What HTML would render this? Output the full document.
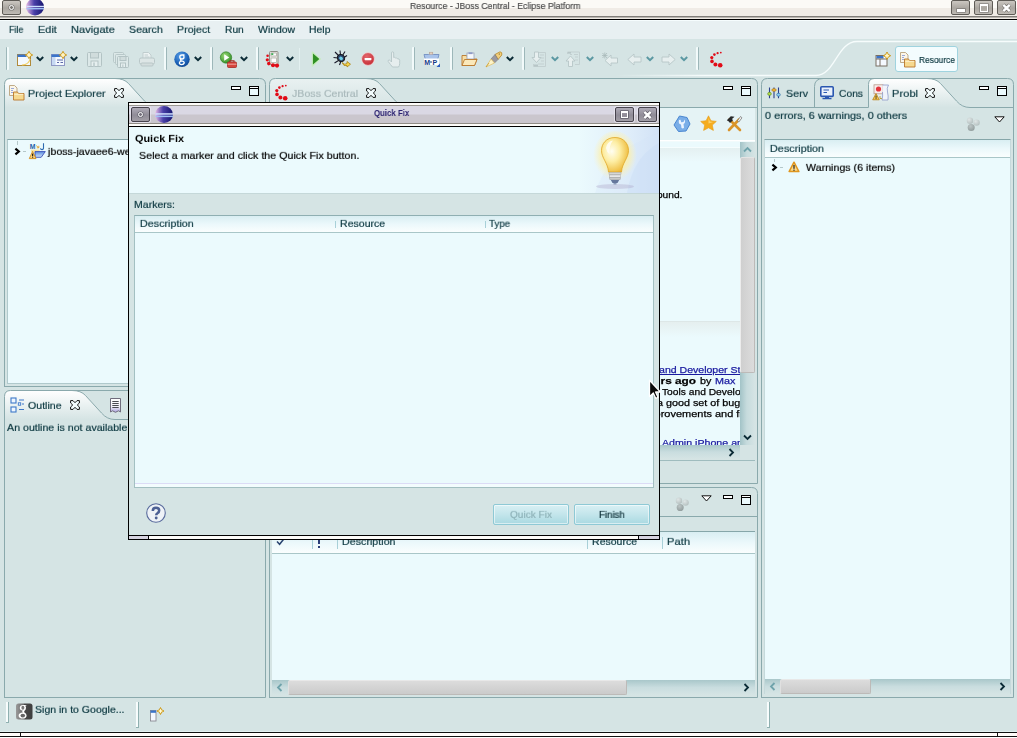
<!DOCTYPE html>
<html><head><meta charset="utf-8"><title>Resource - JBoss Central - Eclipse Platform</title>
<style>
*{box-sizing:border-box;margin:0;padding:0}
html,body{width:1017px;height:738px;overflow:hidden}
body{position:relative;background:#d5e4e4;font-family:"Liberation Sans",sans-serif;font-size:10.5px;color:#0c3840}
.a{position:absolute}
.t{position:absolute;white-space:pre;transform-origin:0 0;will-change:transform}
svg{position:absolute;overflow:visible}
.hd{position:absolute;width:3px;height:22px;top:47px;border-left:1px solid #9fb9ba;border-right:1px solid #f3fbfb;background:#e9f3f3;border-radius:1px}
.dd{position:absolute;top:56px;width:7px;height:5px}
.min{position:absolute;width:10px;height:4px;border:1px solid #000;background:#fff}
.max{position:absolute;width:10px;height:10px;border:1px solid #000;background:#ebfafd}.max i{position:absolute;left:0;top:0;width:8px;height:2px;background:#fff;border-bottom:1px solid #000}
.colh{position:absolute;background:linear-gradient(#d9eef2,#ebf8fb 50%,#fafefe);border-bottom:1px solid #a9c6c8}
.vsep{position:absolute;width:1px;background:#a8d0d8}
</style></head><body>
<!-- SECTION: frame -->
<div class="a" style="left:0;top:0;width:1017px;height:21px;background:linear-gradient(#fbfaf6 0 8px,#f0ece6 8px 16px,#807d79 16px 17px,#b9b5af 17px 18px,#f0ebe5 18px 19px,#000 19px 20px,#f6fdfe 20px 21px)"></div>
<div class="a" style="left:0;top:21px;width:1017px;height:18px;background:#e8f0f2"></div>
<!-- window menu button -->
<div class="a" style="left:2px;top:0;width:19px;height:15px;border:1px solid #5e5b56;border-radius:2px;background:linear-gradient(#cbc7c1,#aaa6a0 55%,#bfbbb5)"></div>
<div class="a" style="left:8.8px;top:4.9px;width:5.4px;height:5.4px;border:1.3px solid #fff;border-radius:50%;background:#7a7772;box-shadow:0 0 0 .6px rgba(60,60,60,.45)"></div>
<!-- eclipse icon -->
<svg style="left:26px;top:-1px" width="18" height="17" viewBox="0 0 18 17"><defs><linearGradient id="ec" x1="0" x2="1"><stop offset="0" stop-color="#ecc4e6"/><stop offset=".22" stop-color="#9a7cc8"/><stop offset=".45" stop-color="#4a40a8"/><stop offset="1" stop-color="#15156e"/></linearGradient></defs><ellipse cx="9" cy="8" rx="9" ry="8.5" fill="url(#ec)"/><rect x="0.5" y="6.8" width="17.5" height="1.4" fill="#cfe0ff"/><rect x="0.5" y="9" width="17.5" height="1.4" fill="#9fc0f5"/></svg>
<!-- window buttons -->
<div class="a" style="left:951px;top:0;width:19px;height:15px;border:1px solid #5e5b56;border-radius:2px;background:linear-gradient(#cbc7c1,#aaa6a0 55%,#bfbbb5)"></div>
<div class="a" style="left:957px;top:9px;width:8px;height:3px;background:#fff;box-shadow:0 0 0 .7px rgba(60,60,60,.45)"></div>
<div class="a" style="left:974px;top:0;width:19px;height:15px;border:1px solid #5e5b56;border-radius:2px;background:linear-gradient(#cbc7c1,#aaa6a0 55%,#bfbbb5)"></div>
<div class="a" style="left:980px;top:4px;width:8px;height:7.5px;border:1.6px solid #fff;border-top-width:2.6px;box-shadow:0 0 0 .7px rgba(60,60,60,.45)"></div>
<div class="a" style="left:997px;top:0;width:19px;height:15px;border:1px solid #5e5b56;border-radius:2px;background:linear-gradient(#cbc7c1,#aaa6a0 55%,#bfbbb5)"></div>
<svg style="left:1002px;top:4px" width="9" height="8" viewBox="0 0 9 8"><path d="M1.3 0.8 L7.7 7.2 M7.7 0.8 L1.3 7.2" stroke="#6a6762" stroke-width="3.6"/><path d="M1.3 0.8 L7.7 7.2 M7.7 0.8 L1.3 7.2" stroke="#fff" stroke-width="2.5"/></svg>

<!-- SECTION: toolbar -->
<div class="a" style="left:6px;top:47px;width:3px;height:23px;background:linear-gradient(90deg,#9db7b9 0 1px,#f2fafa 1px 3px);border-radius:1px"></div>
<svg style="left:17px;top:51px" width="16" height="16" viewBox="0 0 16 16"><rect x="0.5" y="3.5" width="13" height="11" fill="#f4f9ff" stroke="#b08a3a"/><rect x="0.5" y="3.5" width="9" height="2.5" fill="#3b74c9"/><path d="M13 8 Q12 13.5 5 14" fill="none" stroke="#f2cf62" stroke-width="1.2"/><path d="M12 0.3 L13.3 2.7 L15.7 4 L13.3 5.3 L12 7.7 L10.7 5.3 L8.3 4 L10.7 2.7 Z" fill="#f6d56a" stroke="#c8951a" stroke-width="0.9" stroke-linejoin="round"/><path d="M12 2 V6 M10 4 H14" stroke="#fffbe0" stroke-width="1.1"/></svg>
<svg style="left:36px;top:56px" width="8" height="6" viewBox="0 0 8 6"><path d="M0.8 1 L4 4.2 L7.2 1" fill="none" stroke="#0b2b36" stroke-width="2"/></svg>
<svg style="left:51px;top:51px" width="16" height="16" viewBox="0 0 16 16"><rect x="0.5" y="3.5" width="13" height="11" fill="#f4f9ff" stroke="#8f98c4"/><rect x="0.5" y="3.5" width="9" height="2.5" fill="#3b74c9"/><rect x="1" y="6" width="3.5" height="8" fill="#c7d9f3"/><path d="M6 9 H12 M6 11.5 H8 M9.5 11.5 H12" stroke="#5d6aa8" stroke-width="1.1"/><path d="M12 0.3 L13.3 2.7 L15.7 4 L13.3 5.3 L12 7.7 L10.7 5.3 L8.3 4 L10.7 2.7 Z" fill="#f6d56a" stroke="#c8951a" stroke-width="0.9" stroke-linejoin="round"/><path d="M12 2 V6 M10 4 H14" stroke="#fffbe0" stroke-width="1.1"/></svg>
<svg style="left:70px;top:56px" width="8" height="6" viewBox="0 0 8 6"><path d="M0.8 1 L4 4.2 L7.2 1" fill="none" stroke="#0b2b36" stroke-width="2"/></svg>
<svg style="left:87px;top:52px" width="15" height="15" viewBox="0 0 15 15"><rect x="0.5" y="0.5" width="14" height="14" rx="1" fill="#dce8e8" stroke="#b3c3c4"/><rect x="3.5" y="0.5" width="8" height="5.5" fill="#d0dcdc" stroke="#b3c3c4"/><rect x="4" y="9" width="7" height="5.5" fill="#e6efef" stroke="#b3c3c4"/><rect x="6" y="10.5" width="2" height="4" fill="#c4d2d3"/></svg>
<svg style="left:113px;top:52px" width="16" height="16" viewBox="0 0 16 16"><rect x="0.5" y="0.5" width="10" height="10" rx="1" fill="#dce8e8" stroke="#b8c8c9"/><rect x="2.5" y="2.5" width="10" height="10" rx="1" fill="#dce8e8" stroke="#b8c8c9"/><rect x="4.5" y="4.5" width="11" height="11" rx="1" fill="#dde9e9" stroke="#b3c3c4"/><rect x="7" y="4.5" width="6" height="4" fill="#d0dcdc" stroke="#b3c3c4"/><rect x="7.5" y="11" width="5" height="4.5" fill="#e6efef" stroke="#b3c3c4"/><rect x="9" y="12.5" width="1.6" height="3" fill="#c4d2d3"/></svg>
<svg style="left:139px;top:52px" width="16" height="15" viewBox="0 0 16 15"><path d="M4 6 V0.5 H9.5 L12 3 V6" fill="#edf3f3" stroke="#c0cdce"/><path d="M5.5 3 H9 M5.5 5 H10.5" stroke="#c0cdce"/><rect x="0.5" y="6" width="15" height="6" rx="1.5" fill="#dde6e6" stroke="#b9c7c8"/><rect x="2" y="11" width="12" height="3" rx="1" fill="#d3dddd" stroke="#b9c7c8"/></svg>
<div class="a" style="left:164px;top:47px;width:3px;height:23px;background:linear-gradient(90deg,#f2fafa 0 2px,#9db7b9 2px 3px);border-radius:1px"></div>
<svg style="left:174px;top:51px" width="16" height="17" viewBox="0 0 16 17"><defs><radialGradient id="gg" cx=".4" cy=".3" r=".8"><stop offset="0" stop-color="#5aa0e8"/><stop offset=".6" stop-color="#1c62b8"/><stop offset="1" stop-color="#0d3f86"/></radialGradient></defs><circle cx="8" cy="8.3" r="7.7" fill="url(#gg)"/><path d="M10.5 4 H8 Q5.8 4 5.8 6 Q5.8 8 8 8 Q10 8 10 6 Q10 4.6 9 4 M7.5 8 Q5.5 9.2 7.5 9.8 Q10.6 10.5 10.2 12 Q9.8 13.6 7.6 13.6 Q5.2 13.5 5.4 11.8 Q5.6 10.4 7.5 9.9" fill="none" stroke="#fff" stroke-width="1.3"/></svg>
<svg style="left:194px;top:56px" width="8" height="6" viewBox="0 0 8 6"><path d="M0.8 1 L4 4.2 L7.2 1" fill="none" stroke="#0b2b36" stroke-width="2"/></svg>
<div class="a" style="left:210px;top:47px;width:3px;height:23px;background:linear-gradient(90deg,#f2fafa 0 2px,#9db7b9 2px 3px);border-radius:1px"></div>
<svg style="left:220px;top:51px" width="17" height="17" viewBox="0 0 17 17"><defs><radialGradient id="rg" cx=".4" cy=".35" r=".7"><stop offset="0" stop-color="#9edc7a"/><stop offset="1" stop-color="#2d8a22"/></radialGradient></defs><circle cx="6" cy="6.5" r="5.7" fill="url(#rg)" stroke="#2a7a20" stroke-width=".6"/><path d="M4.2 3.2 L9.3 6.5 L4.2 9.8 Z" fill="#fff"/><rect x="7.5" y="11" width="9" height="5.5" rx="1" fill="#d6453e" stroke="#a52822" stroke-width=".8"/><path d="M10 11 V9.8 H14 V11" fill="none" stroke="#a52822" stroke-width="1.1"/><path d="M7.5 13.2 H16.5" stroke="#f3b1a8" stroke-width=".9"/></svg>
<svg style="left:240px;top:56px" width="8" height="6" viewBox="0 0 8 6"><path d="M0.8 1 L4 4.2 L7.2 1" fill="none" stroke="#0b2b36" stroke-width="2"/></svg>
<div class="a" style="left:256px;top:47px;width:3px;height:23px;background:linear-gradient(90deg,#f2fafa 0 2px,#9db7b9 2px 3px);border-radius:1px"></div>
<svg style="left:265px;top:50px" width="16" height="18" viewBox="0 0 16 18"><rect x="4.5" y="1.5" width="8.5" height="13" rx="1" fill="#e9e9e4" stroke="#8d8d84"/><rect x="6" y="3" width="5.5" height="3" fill="#fff" stroke="#a3a39b" stroke-width=".7"/><rect x="6.3" y="3.3" width="2" height="1.6" fill="#2aa745"/><rect x="6" y="8" width="5.5" height="4.5" fill="#fff" stroke="#a3a39b" stroke-width=".7"/><g fill="#e10b17"><circle cx="2.6" cy="5.8" r="1.3"/><circle cx="2.3" cy="9.8" r="1.6"/><circle cx="3.8" cy="13.6" r="1.8"/><circle cx="8" cy="15.3" r="2"/><circle cx="12" cy="15.6" r="2.1"/></g></svg>
<svg style="left:286px;top:56px" width="8" height="6" viewBox="0 0 8 6"><path d="M0.8 1 L4 4.2 L7.2 1" fill="none" stroke="#0b2b36" stroke-width="2"/></svg>
<div class="a" style="left:299px;top:48px;width:1px;height:22px;background:#e3f0f0"></div>
<svg style="left:311px;top:51px" width="11" height="16" viewBox="0 0 11 16"><path d="M1.3 1 L9.3 8 L1.3 15 Z" fill="#3a9a2c" stroke="#c9eec0" stroke-width="1.2" stroke-linejoin="round"/><path d="M2.3 3.2 L7.7 8 L2.3 12.8 Z" fill="#2f8f24"/></svg>
<svg style="left:333px;top:50px" width="18" height="18" viewBox="0 0 18 18"><g stroke="#1a1a2a" stroke-width="1.1"><path d="M2 2 L6 6 M7 0.5 L7.5 5 M12 1.5 L9.5 5.5 M0.5 7.5 L5 8 M1.5 13 L5.5 10.5 M6.5 15 L8 11 M14 5.5 L11 7.5"/></g><ellipse cx="8" cy="8" rx="3.8" ry="3.4" fill="#2a3f66" stroke="#111" transform="rotate(35 8 8)"/><ellipse cx="8.3" cy="8.3" rx="2" ry="1.6" fill="#6fd0e8" transform="rotate(35 8 8)"/><path d="M9 12.5 Q12 15.5 14 13.5 V11.5 L17.5 14.2 L14 17 V15.5 Q10.5 16.8 9 12.5 Z" fill="#f7d54a" stroke="#a9831a" stroke-width=".8"/></svg>
<svg style="left:361px;top:52px" width="14" height="14" viewBox="0 0 14 14"><defs><radialGradient id="sg" cx=".4" cy=".3" r=".8"><stop offset="0" stop-color="#e2666c"/><stop offset="1" stop-color="#c3272f"/></radialGradient></defs><circle cx="7" cy="7" r="6.4" fill="url(#sg)" stroke="#f2dfe0" stroke-width=".8"/><rect x="3.6" y="5.9" width="6.8" height="2.3" rx=".6" fill="#fff"/></svg>
<svg style="left:387px;top:51px" width="15" height="17" viewBox="0 0 15 17"><path d="M4.5 9 V2 Q4.5 0.8 5.6 0.8 Q6.7 0.8 6.7 2 V6.5 Q7.8 5.8 8.6 7 Q9.8 6.5 10.5 7.8 Q12.5 7.3 12.7 9.5 V12.5 Q12.5 15 11.5 16 H5.5 Q3.5 13.5 1.2 10.5 Q0.8 9 2.3 9 Q3.5 9.5 4.5 11 Z" fill="#e6eeee" stroke="#b6c6c7" stroke-width=".9"/></svg>
<div class="a" style="left:412px;top:47px;width:3px;height:23px;background:linear-gradient(90deg,#f2fafa 0 2px,#9db7b9 2px 3px);border-radius:1px"></div>
<svg style="left:423px;top:50px" width="18" height="18" viewBox="0 0 18 18"><path d="M1 4.5 H5.5 Q8 1.5 10.5 4.5 H16 L14.5 10 H2.5 Z" fill="#a9c3ea" stroke="#7390c2" stroke-width=".9"/><rect x="6.4" y="2.2" width="3.4" height="2" fill="#e9d3c0" stroke="#b09a8a" stroke-width=".5"/><rect x="1" y="8.5" width="15" height="6.5" fill="#fff"/><text x="1.2" y="14.6" font-family="Liberation Sans" font-weight="bold" font-size="7" fill="#143a86">M</text><text x="9.5" y="14.6" font-family="Liberation Sans" font-weight="bold" font-size="7" fill="#143a86">P</text><rect x="7.3" y="11.3" width="1.4" height="1.4" fill="#143a86"/><path d="M17 13.5 V17 H13.5 Z" fill="#2b5cc0"/></svg>
<div class="a" style="left:450px;top:47px;width:3px;height:23px;background:linear-gradient(90deg,#f2fafa 0 2px,#9db7b9 2px 3px);border-radius:1px"></div>
<svg style="left:461px;top:52px" width="17" height="15" viewBox="0 0 17 15"><path d="M1 3.5 H5.5 L6.5 5 H12.5 V7 H16 L13.5 13.5 H1 Z" fill="#f7dfa5" stroke="#b9772b" stroke-width=".9" stroke-linejoin="round"/><rect x="6" y="1" width="7" height="6" fill="#f6f8fb" stroke="#9aa2b8" stroke-width=".8"/><rect x="7.5" y="0.3" width="4" height="1.8" fill="#8e9bc8"/><path d="M3.5 7.5 H16 L13.5 13.5 H1 Z" fill="#fbe9bb" stroke="#b9772b" stroke-width=".9" stroke-linejoin="round"/></svg>
<svg style="left:485px;top:51px" width="18" height="17" viewBox="0 0 18 17"><path d="M10 3.5 L15 0.8 Q17.5 1 16.8 4 L13 8.5 Z" fill="#f2cf7a" stroke="#b7862a" stroke-width=".8"/><path d="M6 8 L10 3.5 L13 8.5 L9.5 12 Z" fill="#9b9aa0" stroke="#77767c" stroke-width=".6"/><path d="M6 8 L9.5 12 L1 16 Z" fill="#fdf3c9" stroke="#e0bb5c" stroke-width=".7"/><path d="M1 16 L4 12" stroke="#c99a2e" stroke-width=".8"/><circle cx="14.3" cy="3" r=".6" fill="#5a4a1a"/></svg>
<svg style="left:506px;top:56px" width="8" height="6" viewBox="0 0 8 6"><path d="M0.8 1 L4 4.2 L7.2 1" fill="none" stroke="#0b2b36" stroke-width="2"/></svg>
<div class="a" style="left:522px;top:47px;width:3px;height:23px;background:linear-gradient(90deg,#f2fafa 0 2px,#9db7b9 2px 3px);border-radius:1px"></div>
<svg style="left:531px;top:51px" width="16" height="17" viewBox="0 0 16 17"><path d="M7 1.5 H14.5 V15.5 H2.5 V13" fill="none" stroke="#c3d0d1"/><path d="M9 4 H13 M10 7 H13 M10 10 H13 M7 13 H13" stroke="#c3d0d1"/><path d="M3.5 1 H7.5 V6.5 H10 L5.5 11.5 L1 6.5 H3.5 Z" fill="#e7efef" stroke="#b7c6c7" stroke-width=".9"/><rect x="3" y="13.5" width="4" height="2" fill="#b7c6c7"/></svg>
<svg style="left:551px;top:56px" width="8" height="6" viewBox="0 0 8 6"><path d="M0.8 1 L4 4.2 L7.2 1" fill="none" stroke="#5b98a2" stroke-width="2"/></svg>
<svg style="left:565px;top:51px" width="16" height="17" viewBox="0 0 16 17"><path d="M2.5 3 V1 H14.5 V13.5 H10" fill="none" stroke="#c3d0d1"/><path d="M5 3.5 H7 M9 3.5 H13 M10 6 H13 M10 9 H13" stroke="#c3d0d1"/><path d="M3.5 15.5 H7.5 V10 H10 L5.5 5 L1 10 H3.5 Z" fill="#e7efef" stroke="#b7c6c7" stroke-width=".9"/><rect x="3" y="1" width="3" height="1.6" fill="#b7c6c7"/></svg>
<svg style="left:586px;top:56px" width="8" height="6" viewBox="0 0 8 6"><path d="M0.8 1 L4 4.2 L7.2 1" fill="none" stroke="#5b98a2" stroke-width="2"/></svg>
<svg style="left:601px;top:52px" width="18" height="15" viewBox="0 0 18 15"><path d="M1.5 1 L6 6 M1 3.5 H6.5 M3.8 0.5 V6.5 M6 1 L1.5 6" stroke="#a9baba" stroke-width=".8"/><path d="M10 3 V6 H16.5 V11 H10 V14 L4 8.5 Z" fill="#e7efef" stroke="#b7c6c7" stroke-width=".9"/></svg>
<svg style="left:627px;top:53px" width="15" height="13" viewBox="0 0 15 13"><path d="M7 1 V4 H14 V9 H7 V12 L0.8 6.5 Z" fill="#e7efef" stroke="#b7c6c7" stroke-width=".9"/></svg>
<svg style="left:646px;top:56px" width="8" height="6" viewBox="0 0 8 6"><path d="M0.8 1 L4 4.2 L7.2 1" fill="none" stroke="#5b98a2" stroke-width="2"/></svg>
<svg style="left:661px;top:53px" width="15" height="13" viewBox="0 0 15 13"><path d="M8 1 V4 H1 V9 H8 V12 L14.2 6.5 Z" fill="#e7efef" stroke="#b7c6c7" stroke-width=".9"/></svg>
<svg style="left:680px;top:56px" width="8" height="6" viewBox="0 0 8 6"><path d="M0.8 1 L4 4.2 L7.2 1" fill="none" stroke="#5b98a2" stroke-width="2"/></svg>
<div class="a" style="left:696px;top:47px;width:3px;height:23px;background:linear-gradient(90deg,#f2fafa 0 2px,#9db7b9 2px 3px);border-radius:1px"></div>
<svg style="left:709px;top:51px" width="15.0" height="17.0" viewBox="0 0 15 17"><g fill="#e10b17"><circle cx="11.8" cy="1.6" r=".9"/><circle cx="8.6" cy="2.2" r="1.1"/><circle cx="5.4" cy="3.6" r="1.3"/><circle cx="2.8" cy="6.6" r="1.6"/><circle cx="3" cy="10.4" r="1.8"/><circle cx="6.4" cy="13.4" r="2"/><circle cx="11.2" cy="14.2" r="2.3"/></g></svg>
<!-- SECTION: panels -->
<svg style="left:4px;top:78px" width="262" height="309" viewBox="0 0 262 309"><defs><linearGradient id="g1" x1="0" y1="0" x2="0" y2="1"><stop offset="0" stop-color="#ffffff"/><stop offset="1" stop-color="#d5e4e4"/></linearGradient></defs><path d="M0.5 29.5 V6.5 Q0.5 0.5 6.5 0.5 H111 Q120 0.5 124.5 5.5 L140.5 23 Q146 29.5 154 29.5 Z" fill="url(#g1)"/><path d="M111 0.5 Q120 0.5 124.5 5.5 L140.5 23 Q146 29.5 154 29.5 H261" fill="none" stroke="#8aa9ac"/><path d="M0.5 309 V6.5 Q0.5 0.5 6.5 0.5 H255.5 Q261.5 0.5 261.5 6.5 V308.5 H0.5" fill="none" stroke="#8aa9ac"/></svg>
<div class="min" style="left:231px;top:86px"></div><div class="max" style="left:249px;top:86px"><i></i></div>
<svg style="left:9px;top:85px" width="16" height="16" viewBox="0 0 16 16"><path d="M0.5 0.5 H5.5 L8 3 V10.5 H0.5 Z" fill="#fbf6ea" stroke="#b9a27a" stroke-width=".9"/><path d="M2 3.5 H5 M2 5.5 H4 M2 7.5 H4" stroke="#8fa0d8" stroke-width=".9"/><path d="M4.5 7 H8.5 L9.5 8.5 H15 V15 H4.5 Z" fill="#f6d98f" stroke="#b9772b" stroke-width=".9" stroke-linejoin="round"/><path d="M5.3 9.3 H14.2" stroke="#fdf1cf" stroke-width="1"/></svg>
<svg style="left:114px;top:88px" width="10" height="10" viewBox="0 0 10 10"><path d="M0.6 0.6 H3 L5 2.7 L7 0.6 H9.4 V3 L7.3 5 L9.4 7 V9.4 H7 L5 7.3 L3 9.4 H0.6 V7 L2.7 5 L0.6 3 Z" fill="#f3fcfd" stroke="#111" stroke-width="1" stroke-linejoin="round"/></svg>
<div class="a" style="left:7px;top:139px;width:257px;height:245px;border:1px solid #b0c9cc;border-top-color:#86a6a9;background:#ebfafd"></div>
<svg style="left:14px;top:147px" width="8" height="9" viewBox="0 0 8 9"><path d="M1.4 1.6 L4.8 4.5 L1.4 7.4" fill="none" stroke="#000" stroke-width="2.2"/></svg>
<div class="a" style="left:17px;top:141px;width:1px;height:4px;background:#b5c8ca"></div><div class="a" style="left:23px;top:151px;width:3px;height:1px;background:#b5c8ca"></div>
<svg style="left:29px;top:143px" width="17" height="17" viewBox="0 0 17 17"><defs><linearGradient id="mjf" x1="0" y1="0" x2="0" y2="1"><stop offset="0" stop-color="#5d8fe0"/><stop offset="1" stop-color="#cfe2fa"/></linearGradient></defs><text x="0.8" y="5.8" font-family="Liberation Sans" font-weight="bold" font-size="6.8" fill="#1f5fa8">M</text><path d="M7.2 2.6 L9.6 4.6 M9.8 2.8 V4.8 H7.8" stroke="#e0a030" stroke-width=".9" fill="none"/><path d="M14.5 0.3 V5 Q14.5 6.6 13 6.6 Q11.7 6.6 11.4 5.4" fill="none" stroke="#2d6ab0" stroke-width="1.1"/><rect x="2" y="6.6" width="8.5" height="2.6" fill="#f8e4a4"/><path d="M6 8.6 H16.3 L12.2 14.3 H6 Z" fill="url(#mjf)" stroke="#2a3fb0" stroke-width=".8" stroke-linejoin="round"/><path d="M3.6 8.4 L7 15.6 H0.3 Z" fill="#fbd27a" stroke="#d08a1a" stroke-width=".9" stroke-linejoin="round"/><rect x="3.1" y="10.6" width="1.1" height="2.4" fill="#111"/><rect x="3.1" y="13.6" width="1.1" height="1.1" fill="#111"/></svg>
<svg style="left:4px;top:390px" width="262" height="308" viewBox="0 0 262 308"><defs><linearGradient id="g2" x1="0" y1="0" x2="0" y2="1"><stop offset="0" stop-color="#ffffff"/><stop offset="1" stop-color="#d5e4e4"/></linearGradient></defs><path d="M0.5 29.5 V6.5 Q0.5 0.5 6.5 0.5 H68 Q77 0.5 81.5 5.5 L97.5 23 Q103 29.5 111 29.5 Z" fill="url(#g2)"/><path d="M68 0.5 Q77 0.5 81.5 5.5 L97.5 23 Q103 29.5 111 29.5 H261" fill="none" stroke="#8aa9ac"/><path d="M0.5 308 V6.5 Q0.5 0.5 6.5 0.5 H255.5 Q261.5 0.5 261.5 6.5 V307.5 H0.5" fill="none" stroke="#8aa9ac"/></svg>
<svg style="left:10px;top:397px" width="16" height="16" viewBox="0 0 16 16"><rect x="1" y="1" width="5" height="5" fill="#eef6ff" stroke="#3d78c8" stroke-width="1.1"/><rect x="1" y="10" width="5" height="5" fill="#eef6ff" stroke="#3d78c8" stroke-width="1.1"/><rect x="8.3" y="5.8" width="2.4" height="2.4" fill="#eef6ff" stroke="#3d78c8" stroke-width=".9"/><path d="M9 3 H14 M12 7 H14 M9 12.5 H14" stroke="#3d78c8" stroke-width="1.2"/></svg>
<svg style="left:70px;top:400px" width="10" height="10" viewBox="0 0 10 10"><path d="M0.6 0.6 H3 L5 2.7 L7 0.6 H9.4 V3 L7.3 5 L9.4 7 V9.4 H7 L5 7.3 L3 9.4 H0.6 V7 L2.7 5 L0.6 3 Z" fill="#f3fcfd" stroke="#111" stroke-width="1" stroke-linejoin="round"/></svg>
<svg style="left:110px;top:398px" width="12" height="15" viewBox="0 0 12 15"><defs><linearGradient id="tk" x1="0" y1="0" x2="0" y2="1"><stop offset="0" stop-color="#ffffff"/><stop offset=".6" stop-color="#f0eef8"/><stop offset="1" stop-color="#a9a0dc"/></linearGradient></defs><path d="M0.5 0.5 H10.5 V14 L8.5 12.8 L5.5 14.3 L2.5 12.8 L0.5 14 Z" fill="url(#tk)" stroke="#6f6c7c"/><path d="M2.3 3.5 H8.7 M2.3 5.5 H8.7 M2.3 7.5 H8.7 M2.3 9.5 H8.7" stroke="#4a4a52" stroke-width="1"/></svg>
<svg style="left:269px;top:78px" width="489" height="406" viewBox="0 0 489 406"><defs><linearGradient id="g3" x1="0" y1="0" x2="0" y2="1"><stop offset="0" stop-color="#e9f1f1"/><stop offset="1" stop-color="#d5e4e4"/></linearGradient></defs><path d="M0.5 29.5 V6.5 Q0.5 0.5 6.5 0.5 H97 Q106 0.5 110.5 5.5 L126.5 23 Q132 29.5 140 29.5 Z" fill="url(#g3)"/><path d="M97 0.5 Q106 0.5 110.5 5.5 L126.5 23 Q132 29.5 140 29.5 H488" fill="none" stroke="#8aa9ac"/><path d="M0.5 406 V6.5 Q0.5 0.5 6.5 0.5 H482.5 Q488.5 0.5 488.5 6.5 V405.5 H0.5" fill="none" stroke="#8aa9ac"/></svg>
<div class="min" style="left:723px;top:86px"></div><div class="max" style="left:741px;top:86px"><i></i></div>
<svg style="left:274px;top:84px" width="15.0" height="17.0" viewBox="0 0 15 17"><g fill="#e10b17"><circle cx="11.8" cy="1.6" r=".9"/><circle cx="8.6" cy="2.2" r="1.1"/><circle cx="5.4" cy="3.6" r="1.3"/><circle cx="2.8" cy="6.6" r="1.6"/><circle cx="3" cy="10.4" r="1.8"/><circle cx="6.4" cy="13.4" r="2"/><circle cx="11.2" cy="14.2" r="2.3"/></g></svg>
<svg style="left:366px;top:88px" width="10" height="10" viewBox="0 0 10 10"><path d="M0.6 0.6 H3 L5 2.7 L7 0.6 H9.4 V3 L7.3 5 L9.4 7 V9.4 H7 L5 7.3 L3 9.4 H0.6 V7 L2.7 5 L0.6 3 Z" fill="#f3fcfd" stroke="#111" stroke-width="1" stroke-linejoin="round"/></svg>
<div class="a" style="left:270px;top:108px;width:485px;height:32px;background:#e5f3f5"></div><div class="a" style="left:270px;top:140px;width:485px;height:2px;background:linear-gradient(#ffffff 0 1px,#f2fbfc 1px 2px)"></div><div class="a" style="left:270px;top:142px;width:470px;height:303px;background:#ebfafd"></div><div class="a" style="left:270px;top:147px;width:470px;height:1px;background:#f5fdfe"></div><div class="a" style="left:270px;top:148px;width:470px;height:14px;background:linear-gradient(#e4f0f1,#ebfafd)"></div><div class="a" style="left:270px;top:321px;width:470px;height:16px;background:linear-gradient(#dde7e7 0 1px,#e5efef 1px,#ebfafd 16px)"></div><div class="a" style="left:740px;top:142px;width:15px;height:303px;background:linear-gradient(90deg,#a2c3c7,#c6dbdd 45%,#d5e4e4)"></div><div class="a" style="left:740px;top:157px;width:15px;height:216px;border:1px solid #bdbab8;border-left-color:#ececec;border-top-color:#e4e4e4;border-radius:2px;background:linear-gradient(90deg,#cfcfcf,#dcdcdc)"></div><svg style="left:743px;top:146px" width="9" height="7" viewBox="0 0 9 7"><path d="M1 5.5 L4.5 2 L8 5.5" fill="none" stroke="#6fa3ab" stroke-width="1.8"/></svg><svg style="left:743px;top:434px" width="9" height="7" viewBox="0 0 9 7"><path d="M1 1.5 L4.5 5 L8 1.5" fill="none" stroke="#0b2b36" stroke-width="1.8"/></svg><div class="a" style="left:270px;top:445px;width:470px;height:14px;background:linear-gradient(#a9c7ca,#c9dddf 50%,#d5e4e4)"></div><svg style="left:728px;top:448px" width="7" height="9" viewBox="0 0 7 9"><path d="M1.5 1 L5 4.5 L1.5 8" fill="none" stroke="#0b2b36" stroke-width="1.8"/></svg><div class="a" style="left:270px;top:460px;width:485px;height:1px;background:#9fbcbe"></div><svg style="left:673px;top:115px" width="18" height="18" viewBox="0 0 18 18"><path d="M6.5 1 L14 2.5 L17 9 L13 16 L5.5 16.5 L1 10 Z" fill="#7aaee8" stroke="#4a86d0" stroke-width="1"/><path d="M6 5 Q5 9 8 9.5 L8.5 13 Q10 14 11 12.8 L10.5 9 Q13 7.5 11.5 4.5 L10.5 7 L8.2 7.2 L7.5 4.8 Z" fill="#eaf3ff"/></svg><svg style="left:700px;top:115px" width="17" height="16" viewBox="0 0 17 16"><path d="M8.5 0.8 L10.9 5.7 L16.3 6.4 L12.3 10.1 L13.4 15.4 L8.5 12.8 L3.6 15.4 L4.7 10.1 L0.7 6.4 L6.1 5.7 Z" fill="#f5ac1e" stroke="#e89a10" stroke-width=".6"/><path d="M8.5 3 L10 6.6 L13.5 7 L8.5 8.5 Z" fill="#fbd06a"/></svg><svg style="left:726px;top:115px" width="17" height="17" viewBox="0 0 17 17"><path d="M3.5 4.5 L14 15" stroke="#d9942a" stroke-width="2.6" stroke-linecap="round"/><path d="M13 4.5 L3 15" stroke="#d9942a" stroke-width="2.6" stroke-linecap="round"/><path d="M0.8 5.2 L4.8 1.2 L8.5 1.8 L6 4 L7 5.2 L4 8 L2.8 6.6 Z" fill="#2a2a2a"/><path d="M11.5 5.8 L14.5 1.5 L16 2.8 L12.8 7 Z" fill="#f4f4f4" stroke="#555" stroke-width=".6"/></svg>
<svg style="left:269px;top:487px" width="489" height="211" viewBox="0 0 489 211"><path d="M0.5 29.5 H488" fill="none" stroke="#8aa9ac"/><path d="M0.5 211 V6.5 Q0.5 0.5 6.5 0.5 H482.5 Q488.5 0.5 488.5 6.5 V210.5 H0.5" fill="none" stroke="#8aa9ac"/></svg>
<div class="a" style="left:272px;top:531px;width:483px;height:164px;background:#ebfafd;border-top:1px solid #86a6a9"></div><div class="colh" style="left:272px;top:532px;width:483px;height:22px"></div><div class="vsep" style="left:312px;top:537px;height:12px"></div><div class="vsep" style="left:337px;top:537px;height:12px"></div><div class="vsep" style="left:587px;top:537px;height:12px"></div><div class="vsep" style="left:662px;top:537px;height:12px"></div><svg style="left:276px;top:538px" width="9" height="8" viewBox="0 0 9 8"><path d="M1 3.5 L3.6 6.3 L8 0.8" fill="none" stroke="#2a4470" stroke-width="1.5"/></svg><div class="a" style="left:318px;top:538px;width:2px;height:6px;background:#2a3d78"></div><div class="a" style="left:318px;top:546px;width:2px;height:2px;background:#2a3d78"></div><div class="a" style="left:272px;top:680px;width:483px;height:15px;background:linear-gradient(#a9c7ca,#c9dddf 50%,#d5e4e4)"></div><div class="a" style="left:288px;top:680px;width:339px;height:15px;border:1px solid #bdbab8;border-top-color:#e8e8e8;border-left-color:#e0e0e0;border-radius:2px;background:linear-gradient(#dcdcdc,#cbcbcb)"></div><svg style="left:276px;top:683px" width="7" height="9" viewBox="0 0 7 9"><path d="M5.5 1 L2 4.5 L5.5 8" fill="none" stroke="#6fa3ab" stroke-width="1.8"/></svg><svg style="left:743px;top:683px" width="7" height="9" viewBox="0 0 7 9"><path d="M1.5 1 L5 4.5 L1.5 8" fill="none" stroke="#0b2b36" stroke-width="1.8"/></svg><svg style="left:675px;top:497px" width="15" height="15" viewBox="0 0 15 15"><defs><radialGradient id="b675" cx=".35" cy=".3" r=".75"><stop offset="0" stop-color="#dfe6e6"/><stop offset="1" stop-color="#b4bfbf"/></radialGradient><radialGradient id="c675" cx=".4" cy=".3" r=".75"><stop offset="0" stop-color="#bcc5c5"/><stop offset="1" stop-color="#8f9a9a"/></radialGradient></defs><circle cx="4" cy="3.8" r="3.2" fill="url(#b675)"/><circle cx="10.6" cy="5.6" r="3.2" fill="url(#b675)"/><circle cx="5.2" cy="10.6" r="3.5" fill="url(#c675)"/></svg><svg style="left:701px;top:495px" width="11" height="7" viewBox="0 0 11 7"><path d="M0.8 0.8 H10.2 L5.5 6 Z" fill="#fff" stroke="#111" stroke-width="1"/></svg><div class="min" style="left:723px;top:495px"></div><div class="max" style="left:741px;top:495px"><i></i></div>
<svg style="left:761px;top:78px" width="253" height="620" viewBox="0 0 253 620"><defs><linearGradient id="g5" x1="0" y1="0" x2="0" y2="1"><stop offset="0" stop-color="#ffffff"/><stop offset="1" stop-color="#d5e4e4"/></linearGradient></defs><path d="M107.5 29.5 V6.5 Q107.5 0.5 113.5 0.5 H166 Q175 0.5 179.5 5.5 L195.5 23 Q201 29.5 209 29.5 Z" fill="url(#g5)"/><path d="M0.5 29.5 H107.5 V6.5 Q107.5 0.5 113.5 0.5 H166 Q175 0.5 179.5 5.5 L195.5 23 Q201 29.5 209 29.5 H252" fill="none" stroke="#8aa9ac"/><path d="M53.5 29.5 V8.5 Q53.5 0.5 62.5 0.5" fill="none" stroke="#8aa9ac"/><path d="M0.5 620 V6.5 Q0.5 0.5 6.5 0.5 H246.5 Q252.5 0.5 252.5 6.5 V619.5 H0.5" fill="none" stroke="#8aa9ac"/></svg>
<div class="min" style="left:979px;top:86px"></div><div class="max" style="left:997px;top:86px"><i></i></div>
<svg style="left:767px;top:87px" width="14" height="12" viewBox="0 0 14 14" preserveAspectRatio="none"><path d="M2.5 0.5 V13 M7 0.5 V13 M11.5 0.5 V13" stroke="#2b3f8a" stroke-width="1.1"/><circle cx="2.5" cy="8" r="1.8" fill="#b7e04a" stroke="#5c8a1a" stroke-width=".7"/><ellipse cx="7" cy="3.5" rx="2.2" ry="1.6" fill="#f3b733" stroke="#a8741a" stroke-width=".7"/><circle cx="11.5" cy="9" r="1.8" fill="#8fd0f0" stroke="#2b6aa8" stroke-width=".7"/></svg><svg style="left:820px;top:86px" width="14" height="14" viewBox="0 0 14 14"><rect x="0.8" y="0.8" width="12.4" height="9.6" rx="1" fill="#eaf1fb" stroke="#2a56b0" stroke-width="1.6"/><path d="M3.5 4 H9 M3.5 6.5 H7" stroke="#2a56b0" stroke-width="1.1"/><path d="M5 10.5 H9 V12 H11.5 V13.2 H2.5 V12 H5 Z" fill="#2a56b0"/></svg><svg style="left:873px;top:84px" width="18" height="18" viewBox="0 0 18 18"><rect x="1" y="0.8" width="9" height="9" fill="#f8ecec" stroke="#b89a8a" stroke-width=".8"/><circle cx="5.5" cy="5" r="2.6" fill="#e3343c"/><path d="M9.5 1 H15.5 Q13.5 4 14.5 8 Q15.5 12 15 16 H9 Q10 12 9.5 8" fill="#f1f4fb" stroke="#8d9ac8" stroke-width=".8"/><path d="M3 9.5 L6.3 15.8 H-0.3 Z" fill="#f7c64a" stroke="#b8801a" stroke-width=".8" stroke-linejoin="round"/><rect x="2.6" y="11.6" width=".9" height="2.2" fill="#222"/><rect x="2.6" y="14.2" width=".9" height=".9" fill="#222"/><path d="M7 12 V14.5 H9" fill="none" stroke="#b89a3a" stroke-width=".9"/></svg><svg style="left:925px;top:88px" width="10" height="10" viewBox="0 0 10 10"><path d="M0.6 0.6 H3 L5 2.7 L7 0.6 H9.4 V3 L7.3 5 L9.4 7 V9.4 H7 L5 7.3 L3 9.4 H0.6 V7 L2.7 5 L0.6 3 Z" fill="#f3fcfd" stroke="#111" stroke-width="1" stroke-linejoin="round"/></svg><svg style="left:966px;top:117px" width="15" height="15" viewBox="0 0 15 15"><defs><radialGradient id="b966" cx=".35" cy=".3" r=".75"><stop offset="0" stop-color="#dfe6e6"/><stop offset="1" stop-color="#b4bfbf"/></radialGradient><radialGradient id="c966" cx=".4" cy=".3" r=".75"><stop offset="0" stop-color="#bcc5c5"/><stop offset="1" stop-color="#8f9a9a"/></radialGradient></defs><circle cx="4" cy="3.8" r="3.2" fill="url(#b966)"/><circle cx="10.6" cy="5.6" r="3.2" fill="url(#b966)"/><circle cx="5.2" cy="10.6" r="3.5" fill="url(#c966)"/></svg><svg style="left:994px;top:116px" width="11" height="7" viewBox="0 0 11 7"><path d="M0.8 0.8 H10.2 L5.5 6 Z" fill="#fff" stroke="#111" stroke-width="1"/></svg><div class="a" style="left:764px;top:139px;width:247px;height:555px;border:1px solid #c5d9db;border-top-color:#86a6a9;border-bottom:none;background:#ebfafd"></div><div class="colh" style="left:765px;top:140px;width:245px;height:18px"></div><svg style="left:771px;top:163px" width="8" height="9" viewBox="0 0 8 9"><path d="M1.4 1.6 L4.8 4.5 L1.4 7.4" fill="none" stroke="#000" stroke-width="2.2"/></svg><div class="a" style="left:774px;top:159px;width:1px;height:3px;background:#b5c8ca"></div><div class="a" style="left:780px;top:167px;width:3px;height:1px;background:#b5c8ca"></div><svg style="left:788px;top:161px" width="12" height="12" viewBox="0 0 12 12"><path d="M6 1.2 L10.9 10.6 H1.1 Z" fill="#fbd98a" stroke="#e0961e" stroke-width="1.5" stroke-linejoin="round"/><rect x="5.4" y="4" width="1.2" height="3.8" fill="#222"/><rect x="5.4" y="8.6" width="1.2" height="1.2" fill="#222"/></svg><div class="a" style="left:765px;top:679px;width:245px;height:15px;background:linear-gradient(#a9c7ca,#c9dddf 50%,#d5e4e4)"></div><div class="a" style="left:780px;top:679px;width:91px;height:15px;border:1px solid #bdbab8;border-top-color:#e8e8e8;border-left-color:#e0e0e0;border-radius:2px;background:linear-gradient(#dcdcdc,#cbcbcb)"></div><svg style="left:769px;top:682px" width="7" height="9" viewBox="0 0 7 9"><path d="M5.5 1 L2 4.5 L5.5 8" fill="none" stroke="#6fa3ab" stroke-width="1.8"/></svg><svg style="left:999px;top:682px" width="7" height="9" viewBox="0 0 7 9"><path d="M1.5 1 L5 4.5 L1.5 8" fill="none" stroke="#0b2b36" stroke-width="1.8"/></svg><svg style="left:0;top:0" width="1017" height="80" viewBox="0 0 1017 80"><defs><linearGradient id="pc" gradientUnits="userSpaceOnUse" x1="615" y1="0" x2="705" y2="0"><stop offset="0" stop-color="#f6fcfc" stop-opacity="0"/><stop offset="1" stop-color="#f6fcfc" stop-opacity="1"/></linearGradient></defs><path d="M615 75.5 H816 C835 75.5 837 41.5 857 41.5 H1017" fill="none" stroke="url(#pc)" stroke-width="1.3"/></svg><div class="a" style="left:895px;top:46px;width:63px;height:26px;border:1px solid #9fd3df;border-radius:3px;background:#f3fcfe"></div><svg style="left:900px;top:52px" width="16" height="16" viewBox="0 0 16 16"><path d="M0.5 0.5 H5.5 L8 3 V10.5 H0.5 Z" fill="#fbf6ea" stroke="#b9a27a" stroke-width=".9"/><path d="M2 3.5 H5 M2 5.5 H4 M2 7.5 H4" stroke="#8fa0d8" stroke-width=".9"/><path d="M4.5 7 H8.5 L9.5 8.5 H15 V15 H4.5 Z" fill="#f6d98f" stroke="#b9772b" stroke-width=".9" stroke-linejoin="round"/><path d="M5.3 9.3 H14.2" stroke="#fdf1cf" stroke-width="1"/></svg><svg style="left:875px;top:52px" width="16" height="15" viewBox="0 0 16 15"><rect x="1" y="3.5" width="11" height="10.5" fill="#f4f9ff" stroke="#7a6f62" stroke-width="1"/><rect x="1.5" y="4" width="7" height="2.5" fill="#3b74c9"/><path d="M1 7 H12 M5 7 V14" stroke="#7a6f62" stroke-width="1"/><path d="M12 0 L13.3 2.4 L15.7 3.7 L13.3 5 L12 7.4 L10.7 5 L8.3 3.7 L10.7 2.4 Z" fill="#f6d56a" stroke="#c8951a" stroke-width="0.9" stroke-linejoin="round"/><path d="M12 1.7 V5.7 M10 3.7 H14" stroke="#fffbe0" stroke-width="1.1"/></svg>
<span class="t" style="left:410.2px;top:-1px;font-size:9.8px;line-height:14px;transform:scale(0.8916,1);font-weight:normal;color:#4d4d4d;-webkit-text-stroke:.2px;">Resource - JBoss Central - Eclipse Platform</span>
<span class="t" style="left:9.2px;top:24px;font-size:10px;line-height:14px;transform:scale(0.8930,0.9);font-weight:normal;color:#0c3840;-webkit-text-stroke:.2px;">File</span>
<span class="t" style="left:38.1px;top:24px;font-size:10px;line-height:14px;transform:scale(1.0908,0.9);font-weight:normal;color:#0c3840;-webkit-text-stroke:.2px;">Edit</span>
<span class="t" style="left:71.1px;top:24px;font-size:10px;line-height:14px;transform:scale(1.1072,0.9);font-weight:normal;color:#0c3840;-webkit-text-stroke:.2px;">Navigate</span>
<span class="t" style="left:129.2px;top:24px;font-size:10px;line-height:14px;transform:scale(1.0667,0.9);font-weight:normal;color:#0c3840;-webkit-text-stroke:.2px;">Search</span>
<span class="t" style="left:177.0px;top:24px;font-size:10px;line-height:14px;transform:scale(1.0635,0.9);font-weight:normal;color:#0c3840;-webkit-text-stroke:.2px;">Project</span>
<span class="t" style="left:225.2px;top:24px;font-size:10px;line-height:14px;transform:scale(1.0240,0.9);font-weight:normal;color:#0c3840;-webkit-text-stroke:.2px;">Run</span>
<span class="t" style="left:257.6px;top:24px;font-size:10px;line-height:14px;transform:scale(1.0428,0.9);font-weight:normal;color:#0c3840;-webkit-text-stroke:.2px;">Window</span>
<span class="t" style="left:309.2px;top:24px;font-size:10px;line-height:14px;transform:scale(1.0399,0.9);font-weight:normal;color:#0c3840;-webkit-text-stroke:.2px;">Help</span>
<span class="t" style="left:28.1px;top:88px;font-size:10px;line-height:14px;transform:scale(1.0894,0.9);font-weight:normal;color:#0c3840;-webkit-text-stroke:.2px;">Project Explorer</span>
<span class="t" style="left:291.6px;top:88px;font-size:10px;line-height:14px;transform:scale(1.0602,0.9);font-weight:normal;color:#a9b9bb;-webkit-text-stroke:.2px;">JBoss Central</span>
<span class="t" style="left:785.6px;top:88px;font-size:10px;line-height:14px;transform:scale(1.0699,0.9);font-weight:normal;color:#0c3840;-webkit-text-stroke:.2px;">Serv</span>
<span class="t" style="left:838.6px;top:88px;font-size:10px;line-height:14px;transform:scale(1.0274,0.9);font-weight:normal;color:#0c3840;-webkit-text-stroke:.2px;">Cons</span>
<span class="t" style="left:891.6px;top:88px;font-size:10px;line-height:14px;transform:scale(1.1130,0.9);font-weight:normal;color:#0c3840;-webkit-text-stroke:.2px;">Probl</span>
<span class="t" style="left:918.6px;top:53px;font-size:9.8px;line-height:14px;transform:scale(0.8584,1);font-weight:normal;color:#0c3840;-webkit-text-stroke:.35px;-webkit-text-stroke:.2px;">Resource</span>
<span class="t" style="left:764.6px;top:110px;font-size:10px;line-height:14px;transform:scale(1.0918,0.9);font-weight:normal;color:#0c3840;-webkit-text-stroke:.2px;">0 errors, 6 warnings, 0 others</span>
<span class="t" style="left:769.6px;top:143px;font-size:10px;line-height:14px;transform:scale(1.0793,0.9);font-weight:normal;color:#0c3840;-webkit-text-stroke:.2px;">Description</span>
<span class="t" style="left:805.6px;top:162px;font-size:10px;line-height:14px;transform:scale(1.0653,0.9);font-weight:normal;color:#000;-webkit-text-stroke:.2px;">Warnings (6 items)</span>
<span class="t" style="left:48.1px;top:146px;font-size:10px;line-height:14px;transform:scale(1.0608,0.9);font-weight:normal;color:#000;-webkit-text-stroke:.2px;">jboss-javaee6-webapp</span>
<span class="t" style="left:28.1px;top:400px;font-size:10px;line-height:14px;transform:scale(1.0572,0.9);font-weight:normal;color:#0c3840;-webkit-text-stroke:.2px;">Outline</span>
<span class="t" style="left:6.6px;top:422px;font-size:10px;line-height:14px;transform:scale(1.0606,0.9);font-weight:normal;color:#0c3840;-webkit-text-stroke:.2px;">An outline is not available.</span>
<span class="t" style="left:35.1px;top:704px;font-size:10px;line-height:14px;transform:scale(1.0522,0.9);font-weight:normal;color:#0c3840;-webkit-text-stroke:.2px;">Sign in to Google...</span>
<span class="t" style="left:342.1px;top:536px;font-size:10px;line-height:14px;transform:scale(1.0693,0.9);font-weight:normal;color:#0c3840;-webkit-text-stroke:.2px;">Description</span>
<span class="t" style="left:591.6px;top:536px;font-size:10px;line-height:14px;transform:scale(1.0511,0.9);font-weight:normal;color:#0c3840;-webkit-text-stroke:.2px;">Resource</span>
<span class="t" style="left:666.6px;top:536px;font-size:10px;line-height:14px;transform:scale(1.1177,0.9);font-weight:normal;color:#0c3840;-webkit-text-stroke:.2px;">Path</span>
<div class="a" style="left:600px;top:142px;width:140px;height:303px;overflow:hidden"><div class="a" style="left:-600px;top:-142px;width:1017px;height:738px">
<span class="t" style="left:600.1px;top:363px;font-size:9.8px;line-height:14px;transform:scale(1.0766,1);font-weight:normal;color:#1a1aa0;text-decoration:underline;-webkit-text-stroke:.25px;">JBoss Tools and Developer Studio</span>
<span class="t" style="left:639.3px;top:374px;font-size:9.8px;line-height:14px;transform:scale(1.2038,1);font-weight:bold;color:#000;-webkit-text-stroke:.25px;">hours ago</span>
<span class="t" style="left:700.2px;top:374px;font-size:9.8px;line-height:14px;transform:scale(1.1005,1);font-weight:normal;color:#000;-webkit-text-stroke:.25px;">by</span>
<span class="t" style="left:715.2px;top:374px;font-size:9.8px;line-height:14px;transform:scale(1.1018,1);font-weight:normal;color:#1a1aa0;-webkit-text-stroke:.25px;">Max</span>
<span class="t" style="left:662.2px;top:385px;font-size:9.8px;line-height:14px;transform:scale(1.0456,1);font-weight:normal;color:#000;-webkit-text-stroke:.25px;">Tools and Developer</span>
<span class="t" style="left:656.8px;top:396px;font-size:9.8px;line-height:14px;transform:scale(1.0997,1);font-weight:normal;color:#000;-webkit-text-stroke:.25px;">a good set of bugfixes</span>
<span class="t" style="left:642.6px;top:407px;font-size:9.8px;line-height:14px;transform:scale(1.1202,1);font-weight:normal;color:#000;-webkit-text-stroke:.25px;">improvements and fixes</span>
<span class="t" style="left:662.2px;top:436px;font-size:9.8px;line-height:14px;transform:scale(1.0852,1);font-weight:normal;color:#1a1aa0;text-decoration:underline;-webkit-text-stroke:.25px;">Admin iPhone and</span>
<span class="t" style="left:637.1px;top:188px;font-size:9.8px;line-height:14px;transform:scale(1.0431,1);font-weight:normal;color:#000;-webkit-text-stroke:.25px;">not found.</span>
</div></div>
<!-- SECTION: statusbar -->
<div class="a" style="left:6px;top:702px;width:3px;height:21px;background:linear-gradient(90deg,#f7fcfc 0 2px,#8fb0b0 2px 3px);border-bottom:1px solid #8fb0b0"></div>
<div class="a" style="left:136px;top:702px;width:3px;height:26px;background:linear-gradient(90deg,#f7fcfc 0 2px,#8fb0b0 2px 3px);border-bottom:1px solid #8fb0b0"></div>
<div class="a" style="left:767px;top:702px;width:3px;height:26px;background:linear-gradient(90deg,#f7fcfc 0 2px,#8fb0b0 2px 3px);border-bottom:1px solid #8fb0b0"></div>
<svg style="left:16px;top:703px" width="17" height="17" viewBox="0 0 17 17"><defs><linearGradient id="gi" x1="0" x2="1"><stop offset="0" stop-color="#9a9a9a"/><stop offset=".45" stop-color="#6a6a6a"/><stop offset=".5" stop-color="#4a4a4a"/><stop offset="1" stop-color="#3e3e3e"/></linearGradient></defs><rect x="0" y="0.5" width="16.5" height="16" rx="2.5" fill="url(#gi)"/><path d="M10 2 H7 Q3.8 2.2 3.8 4.8 Q3.8 7.4 6.6 7.4 Q5.6 8.6 6.8 9.6 Q2.6 9.8 2.6 12.8 Q2.8 15.6 6.8 15.6 Q10.6 15.4 10.6 12.4 Q10.6 10.6 8.4 9.4 Q7.8 8.6 8.6 7.8 Q10 6.8 10 4.8 Q10 3.4 9 2.8 H10.6 Z" fill="#fff"/><ellipse cx="6.9" cy="4.7" rx="1.5" ry="2" fill="#777"/><ellipse cx="6.8" cy="12.6" rx="2.3" ry="1.9" fill="#666"/></svg>
<svg style="left:150px;top:707px" width="15" height="15" viewBox="0 0 15 15"><rect x="0.5" y="3.5" width="5.5" height="10.5" fill="#f4f8ff" stroke="#8a8a92" stroke-width=".9"/><rect x="0.5" y="3.5" width="5.5" height="2.3" fill="#3b74c9"/><path d="M10.5 0.5 L11.7 2.8 L14 4 L11.7 5.2 L10.5 7.5 L9.3 5.2 L7 4 L9.3 2.8 Z" fill="#f6d56a" stroke="#c8951a" stroke-width=".9" stroke-linejoin="round"/><path d="M10.5 2.2 V5.8 M8.7 4 H12.3" stroke="#fffbe0" stroke-width="1"/></svg>

<!-- SECTION: dialog -->
<div class="a" style="left:128px;top:102px;width:532px;height:438px;background:#000"></div>
<div class="a" style="left:129px;top:103px;width:530px;height:23px;background:linear-gradient(#fdfcf9 0 2px,#9b9891 2px 3px,#dad8e4 3px 11px,#cac6cd 12px 20px,#8f8c86 20px 21px,#fdfcf9 21px 23px)"></div>
<div class="a" style="left:131px;top:107px;width:19px;height:15px;border:1px solid #47434d;border-radius:2px;background:linear-gradient(#aeaab6,#908c97 55%,#a29ea6);box-shadow:0 0 0 1px rgba(236,234,244,.7)"></div><div class="a" style="left:137.8px;top:111.9px;width:5.4px;height:5.4px;border:1.3px solid #fff;border-radius:50%;background:#76727e;box-shadow:0 0 0 .6px rgba(60,60,70,.5)"></div>
<svg style="left:155px;top:106px" width="18" height="17" viewBox="0 0 18 17"><ellipse cx="9" cy="8.5" rx="9" ry="8.5" fill="url(#ec)"/><rect x="0.5" y="7.2" width="17.5" height="1.5" fill="#cfe0ff"/><rect x="0.5" y="9.6" width="17.5" height="1.5" fill="#9fc0f5"/></svg>
<div class="a" style="left:615px;top:107px;width:19px;height:15px;border:1px solid #47434d;border-radius:2px;background:linear-gradient(#aeaab6,#908c97 55%,#a29ea6);box-shadow:0 0 0 1px rgba(236,234,244,.7)"></div><div class="a" style="left:620.8px;top:111.2px;width:7.4px;height:7px;border:1.4px solid #fff;border-top-width:2.4px;box-shadow:0 0 0 .7px rgba(50,50,60,.6)"></div>
<div class="a" style="left:638px;top:107px;width:19px;height:15px;border:1px solid #47434d;border-radius:2px;background:linear-gradient(#aeaab6,#908c97 55%,#a29ea6);box-shadow:0 0 0 1px rgba(236,234,244,.7)"></div><svg style="left:643px;top:110.5px" width="9" height="8" viewBox="0 0 9 8"><path d="M1.3 0.8 L7.7 7.2 M7.7 0.8 L1.3 7.2" stroke="#55515b" stroke-width="3.6"/><path d="M1.3 0.8 L7.7 7.2 M7.7 0.8 L1.3 7.2" stroke="#fff" stroke-width="2.5"/></svg>
<div class="a" style="left:129px;top:127px;width:530px;height:408px;background:#d5e4e4"></div>
<div class="a" style="left:129px;top:127px;width:530px;height:66px;background:#ebfafd;overflow:hidden"><svg style="left:380px;top:0" width="150" height="66" viewBox="0 0 150 66"><defs><linearGradient id="bn" x1="0" x2="1"><stop offset="0" stop-color="#ebfafd"/><stop offset=".6" stop-color="#e0eefa"/><stop offset="1" stop-color="#d2e2f6"/></linearGradient><radialGradient id="gl" cx=".5" cy=".45" r=".5"><stop offset="0" stop-color="#fff3a8" stop-opacity="1"/><stop offset=".65" stop-color="#fdf0a8" stop-opacity=".75"/><stop offset="1" stop-color="#fdf3c0" stop-opacity="0"/></radialGradient><radialGradient id="bu" cx=".38" cy=".4" r=".75"><stop offset="0" stop-color="#fffef2"/><stop offset=".4" stop-color="#fdeea4"/><stop offset=".8" stop-color="#f0c24a"/><stop offset="1" stop-color="#dea226"/></radialGradient></defs><rect x="70" y="0" width="80" height="66" fill="url(#bn)"/><path d="M86 66 Q100 22 150 6 V66 Z" fill="#d3e3f7" opacity=".3"/><path d="M118 66 Q124 30 150 16 V66 Z" fill="#c9dcf5" opacity=".4"/><ellipse cx="106" cy="59.5" rx="19" ry="2.6" fill="#9d8fb8" opacity=".28"/><ellipse cx="106" cy="30" rx="22" ry="26" fill="url(#gl)"/><path d="M106 10.5 C97 10.5 92.5 17 92.5 23.5 C92.5 31 99 36 99.5 45 H112.5 C113 36 119.5 31 119.5 23.5 C119.5 17 115 10.5 106 10.5 Z" fill="url(#bu)" stroke="#e0a72a" stroke-width=".8"/><path d="M97 21 Q98 14.5 104 13.5 Q100 18 100.5 27 Q97.5 25 97 21 Z" fill="#fffdf2" opacity=".9"/><rect x="100" y="45.5" width="12" height="2.2" fill="#d6d6d6" stroke="#a5a5a5" stroke-width=".5"/><rect x="100.3" y="48" width="11.4" height="2.2" fill="#ececec" stroke="#a5a5a5" stroke-width=".5"/><rect x="100.8" y="50.5" width="10.4" height="2.2" fill="#c9c9c9" stroke="#999" stroke-width=".5"/><path d="M101.8 53 H110.2 L108.5 56 H103.5 Z" fill="#66779c"/><rect x="104.5" y="56" width="3" height="1.5" fill="#8a9ab8"/></svg></div>
<div class="a" style="left:129px;top:193px;width:530px;height:1px;background:#c5d8d9"></div>
<div class="a" style="left:134px;top:215px;width:520px;height:273px;border:1px solid #a3c0c2;border-top-color:#8fafb2;background:#ebfafd;box-shadow:inset 0 -3px 0 #f3fcfe,inset 0 -4px 0 #dcdcf6"></div>
<div class="colh" style="left:135px;top:216px;width:518px;height:17px"></div>
<div class="vsep" style="left:335px;top:221px;height:7px"></div><div class="vsep" style="left:485px;top:221px;height:7px"></div>
<svg style="left:146px;top:503px" width="20" height="20" viewBox="0 0 20 20"><circle cx="10" cy="10" r="9.3" fill="#eef2f7" stroke="#586a9c" stroke-width="1.1"/><path d="M6.8 8 Q6.8 4.8 10 4.8 Q13.2 4.8 13.2 7.6 Q13.2 9.3 11.5 10.2 Q10.2 11 10.2 12.2" fill="none" stroke="#4d6094" stroke-width="2.5"/><circle cx="10.2" cy="15" r="1.45" fill="#4d6094"/></svg>
<div class="a" style="left:493px;top:504px;width:76px;height:21px;border:1px solid #8ec9d5;border-radius:2px;background:linear-gradient(#d9f0f4,#c3e5eb 50%,#a9d9e1);box-shadow:inset 0 0 0 1px rgba(255,255,255,.55)"></div>
<div class="a" style="left:574px;top:504px;width:76px;height:21px;border:1px solid #8ec9d5;border-radius:2px;background:linear-gradient(#d9f0f4,#c3e5eb 50%,#a9d9e1);box-shadow:inset 0 0 0 1px rgba(255,255,255,.55)"></div>
<div class="a" style="left:129px;top:536px;width:530px;height:3px;background:#fdfcf9"></div>
<div class="a" style="left:129px;top:536px;width:20px;height:3px;background:#d6d3e0;border-right:1px solid #000"></div>
<div class="a" style="left:638px;top:536px;width:21px;height:3px;background:#d6d3e0;border-left:1px solid #000"></div>
<span class="t" style="left:373.5px;top:106px;font-size:9.8px;line-height:14px;transform:scale(0.7980,1);font-weight:bold;color:#2a2170;">Quick Fix</span>
<span class="t" style="left:134.6px;top:133px;font-size:10px;line-height:14px;transform:scale(1.0885,0.9);font-weight:bold;color:#000;">Quick Fix</span>
<span class="t" style="left:139.3px;top:150px;font-size:10px;line-height:14px;transform:scale(1.0684,0.9);font-weight:normal;color:#000;-webkit-text-stroke:.2px;">Select a marker and click the Quick Fix button.</span>
<span class="t" style="left:134.1px;top:199px;font-size:10px;line-height:14px;transform:scale(1.0512,0.9);font-weight:normal;color:#0c3840;-webkit-text-stroke:.2px;">Markers:</span>
<span class="t" style="left:140.2px;top:218px;font-size:10px;line-height:14px;transform:scale(1.0733,0.9);font-weight:normal;color:#0c3840;-webkit-text-stroke:.2px;">Description</span>
<span class="t" style="left:339.8px;top:218px;font-size:10px;line-height:14px;transform:scale(1.0534,0.9);font-weight:normal;color:#0c3840;-webkit-text-stroke:.2px;">Resource</span>
<span class="t" style="left:489.4px;top:218px;font-size:10px;line-height:14px;transform:scale(0.9775,0.9);font-weight:normal;color:#0c3840;-webkit-text-stroke:.2px;">Type</span>
<span class="t" style="left:510.1px;top:509px;font-size:10px;line-height:14px;transform:scale(1.0055,0.9);font-weight:normal;color:#8fb3b9;-webkit-text-stroke:.2px;">Quick Fix</span>
<span class="t" style="left:599.2px;top:509px;font-size:10px;line-height:14px;transform:scale(0.9705,0.9);font-weight:normal;color:#0c2e36;-webkit-text-stroke:.2px;">Finish</span>
<svg style="left:647px;top:378px" width="16" height="23" viewBox="0 0 16 23"><path d="M2.5 2.3 V18.6 L6.3 15 L8.7 20.3 L11 19.3 L8.6 14 H13.4 Z" fill="#0a0a0a" stroke="#fff" stroke-width="1.3" stroke-linejoin="round"/></svg>
<!-- SECTION: bottom -->
<div class="a" style="left:0;top:731px;width:1017px;height:1px;background:#e2f1f1"></div>
<div class="a" style="left:0;top:732px;width:1017px;height:1px;background:#111"></div>
<div class="a" style="left:0;top:733px;width:1017px;height:3px;background:#fffdfa"></div>
<div class="a" style="left:0;top:736px;width:1017px;height:1px;background:#111"></div>
<div class="a" style="left:0;top:737px;width:1017px;height:1px;background:#fff"></div>
<div class="a" style="left:20px;top:733px;width:1px;height:3px;background:#111"></div>
<div class="a" style="left:997px;top:733px;width:1px;height:3px;background:#111"></div>

</body></html>
